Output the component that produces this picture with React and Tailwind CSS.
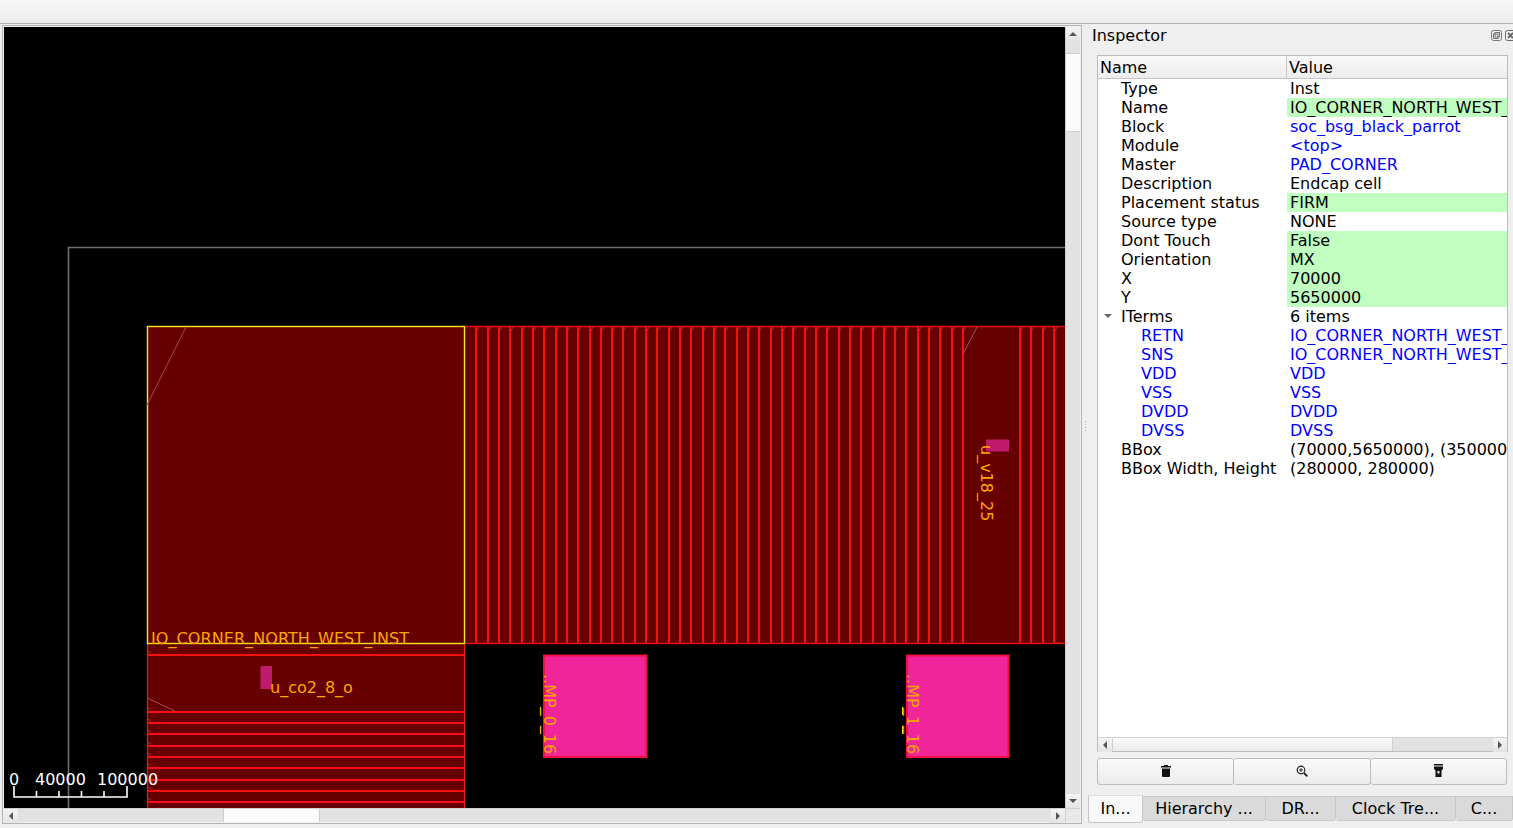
import React from 'react';

const rows = [
  { name: 'Type', value: 'Inst' },
  { name: 'Name', value: 'IO_CORNER_NORTH_WEST_INST', green: true },
  { name: 'Block', value: 'soc_bsg_black_parrot', link: true },
  { name: 'Module', value: '<top>', link: true },
  { name: 'Master', value: 'PAD_CORNER', link: true },
  { name: 'Description', value: 'Endcap cell' },
  { name: 'Placement status', value: 'FIRM', green: true },
  { name: 'Source type', value: 'NONE' },
  { name: 'Dont Touch', value: 'False', green: true },
  { name: 'Orientation', value: 'MX', green: true },
  { name: 'X', value: '70000', green: true },
  { name: 'Y', value: '5650000', green: true },
  { name: 'ITerms', value: '6 items', open: true },
  { name: 'RETN', value: 'IO_CORNER_NORTH_WEST_INST/RETN', child: true, link: true },
  { name: 'SNS', value: 'IO_CORNER_NORTH_WEST_INST/SNS', child: true, link: true },
  { name: 'VDD', value: 'VDD', child: true, link: true },
  { name: 'VSS', value: 'VSS', child: true, link: true },
  { name: 'DVDD', value: 'DVDD', child: true, link: true },
  { name: 'DVSS', value: 'DVSS', child: true, link: true },
  { name: 'BBox', value: '(70000,5650000), (350000,5930000)' },
  { name: 'BBox Width, Height', value: '(280000, 280000)' },
];

const font = 'DejaVu Sans, sans-serif';

// pad cell edges along the top row
const padLines = [];
for (let i = 1; i <= 44; i++) padLines.push(Math.round(465 + i * 11.32));
const padLinesRight = [1020, 1031, 1043, 1054];
const stripeYs = [655, 712, 723, 734, 746, 757, 768, 780, 791, 802];

function Canvas() {
  // svg origin sits at page (4, 27)
  return (
    <svg width="1061" height="781" viewBox="4 27 1061 781" className="block shrink-0 bg-black">
      <path d="M68.5 808V247.5H1065" fill="none" stroke="#6e6e6e" strokeWidth="1.6" />

      <rect x="147" y="326" width="918" height="318" fill="#660000" />
      <rect x="147" y="644" width="318" height="164" fill="#660000" />

      {padLines.concat(padLinesRight).map((x) => (
        <g key={x}>
          <line x1={x} y1="326" x2={x} y2="644" stroke="#f50f0f" strokeWidth="2" />
          <line x1={x + 1} y1="331" x2={x + 3} y2="327" stroke="#b04040" strokeWidth="0.8" />
        </g>
      ))}
      <line x1="465" y1="326.5" x2="1065" y2="326.5" stroke="#e81010" strokeWidth="1.3" />
      <line x1="465" y1="643.5" x2="1065" y2="643.5" stroke="#e81010" strokeWidth="1.3" />
      <line x1="963" y1="354" x2="977" y2="327" stroke="#a05050" strokeWidth="1" />

      {stripeYs.map((y) => (
        <g key={y}>
          <line x1="147" y1={y} x2="465" y2={y} stroke="#f50f0f" strokeWidth="2" />
          <line x1="148" y1={y - 4} x2="151" y2={y - 2} stroke="#b04040" strokeWidth="0.8" />
        </g>
      ))}
      <line x1="147.5" y1="644" x2="147.5" y2="808" stroke="#e02010" strokeWidth="1.2" />
      <line x1="464.5" y1="644" x2="464.5" y2="808" stroke="#e02010" strokeWidth="1.2" />
      <line x1="147" y1="698" x2="175" y2="711" stroke="#a05050" strokeWidth="1" />

      <rect x="147.5" y="326.5" width="317" height="317" fill="none" stroke="#ffe81a" strokeWidth="1.4" />
      <line x1="147" y1="405" x2="186" y2="327" stroke="#a05050" strokeWidth="1" />

      <rect x="260.5" y="666" width="11.5" height="23" fill="#c01a6e" />
      <rect x="986" y="439.5" width="23" height="12" fill="#c01a6e" />

      <g fill="#f0259a" stroke="#f01040" strokeWidth="2">
        <rect x="544" y="655.5" width="102.5" height="101.5" />
        <rect x="907" y="655.5" width="101.5" height="101.5" />
      </g>
      <g fill="#ffe81a">
        <rect x="540" y="707" width="1" height="8" />
        <rect x="540" y="726" width="1" height="8" />
        <rect x="902" y="707" width="1" height="8" />
        <rect x="902" y="726" width="1" height="8" />
      </g>

      <g fontFamily={font} fontSize="16" fill="#ffa500">
        <text x="151" y="644" letterSpacing="0.08">IO_CORNER_NORTH_WEST_INST</text>
        <text x="270" y="693">u_co2_8_o</text>
        <text transform="translate(981 445) rotate(90)">u_v18_25</text>
        <text transform="translate(544 674) rotate(90)">..MP_0_16</text>
        <text transform="translate(907 674) rotate(90)">..MP_1_16</text>
      </g>

      <g fontFamily={font} fontSize="16" fill="#ffffff">
        <text x="9" y="785">0</text>
        <text x="35" y="785">40000</text>
        <text x="97" y="785">100000</text>
      </g>
      <path d="M14 786V797H127V786M36.5 791V797M59 791V797M81.5 791V797M104 791V797" fill="none" stroke="#ffffff" strokeWidth="1.6" />
    </svg>
  );
}

function Arrow({ dir }) {
  const d = {
    up: 'M0 4L4 0L8 4Z',
    down: 'M0 0L4 4L8 0Z',
    left: 'M4 0L0 4L4 8Z',
    right: 'M0 0L4 4L0 8Z',
  }[dir];
  const vert = dir === 'up' || dir === 'down';
  return (
    <svg width={vert ? 8 : 4} height={vert ? 4 : 8}>
      <path d={d} fill="#555555" />
    </svg>
  );
}

function ScrollBtn({ dir }) {
  return (
    <div className="w-[14px] h-[14px] shrink-0 flex items-center justify-center bg-gradient-to-b from-[#f4f4f4] to-[#e4e4e4]">
      <Arrow dir={dir} />
    </div>
  );
}

function TrashIcon() {
  return (
    <svg width="10" height="12" viewBox="0 0 10 12">
      <path d="M3 0h4v1h3v1.5H0V1h3zM1 3.5h8V11a1 1 0 0 1-1 1H2a1 1 0 0 1-1-1z" fill="#111111" />
    </svg>
  );
}

function ZoomIcon() {
  return (
    <svg width="12" height="12" viewBox="0 0 12 12" fill="none" stroke="#222222">
      <circle cx="5" cy="5" r="3.8" strokeWidth="1.2" />
      <path d="M3.2 5h3.6M5 3.2v3.6" strokeWidth="1" />
      <path d="M8 8l3.4 3.4" strokeWidth="1.8" />
    </svg>
  );
}

function TorchIcon() {
  return (
    <svg width="9" height="13" viewBox="0 0 9 13">
      <path d="M0 0h9v1.5H0zM0 2.5h9V5L7.5 6.5V13h-6V6.5L0 5z" fill="#111111" />
      <rect x="3.5" y="7" width="2" height="2.5" fill="#f0f0f0" />
    </svg>
  );
}

function TreeRow({ row }) {
  return (
    <div className="flex h-[19px] leading-[19px]">
      <div className={`relative w-[189px] shrink-0 whitespace-nowrap ${row.child ? 'pl-[43px] text-[#0000ff]' : 'pl-[23px]'}`}>
        {row.open && (
          <svg width="8" height="5" className="absolute left-[6px] top-[7px]">
            <path d="M0 0H8L4 4Z" fill="#666666" />
          </svg>
        )}
        {row.name}
      </div>
      <div className={`flex-1 min-w-0 overflow-hidden whitespace-nowrap pl-[3px] ${row.green ? 'bg-[#c0ffc0]' : ''} ${row.link ? 'text-[#0000ff]' : ''}`}>
        {row.value}
      </div>
    </div>
  );
}

function Tab({ width, active, children }) {
  if (active) {
    return (
      <div className={`${width} h-[28px] shrink-0 flex items-center justify-center bg-[#f8f8f8] border border-[#c4c4c4] border-t-[#dcdcdc] rounded-b-[3px]`}>
        {children}
      </div>
    );
  }
  return (
    <div className={`${width} h-[25px] mt-px shrink-0 flex items-center justify-center bg-[#dadada] border border-[#c8c8c8] border-l-0 rounded-b-[3px]`}>
      {children}
    </div>
  );
}

export default function App() {
  return (
    <div className="w-[1513px] h-[828px] overflow-hidden flex flex-col bg-[#efefef] text-[16px] text-black" style={{ fontFamily: font }}>
      <div className="h-[24px] shrink-0 bg-gradient-to-b from-[#f7f7f7] to-[#eeeeee] border-b border-[#b4b4b4]"></div>

      <div className="flex flex-1 min-h-0 pl-[2px]">
        {/* layout viewer */}
        <div className="w-[1080px] h-[799px] mt-px shrink-0 border border-[#b4b4b4] p-px bg-[#f0f0f0]">
          <div className="flex">
            <Canvas />
            <div className="w-[15px] h-[781px] flex flex-col bg-[#e2e2e2] border-l border-[#cfcfcf]">
              <ScrollBtn dir="up" />
              <div className="h-[12px] shrink-0 bg-[#e2e2e2]"></div>
              <div className="h-[79px] shrink-0 bg-[#fbfbfb] border-y border-[#d0d0d0]"></div>
              <div className="flex-1"></div>
              <ScrollBtn dir="down" />
            </div>
          </div>
          <div className="flex h-[14px] border-t border-[#cfcfcf]">
            <ScrollBtn dir="left" />
            <div className="w-[205px] bg-[#e2e2e2]"></div>
            <div className="w-[97px] bg-[#fbfbfb] border-x border-[#cccccc]"></div>
            <div className="w-[731px] bg-[#e2e2e2]"></div>
            <ScrollBtn dir="right" />
            <div className="flex-1 bg-[#e8e8e8] border-l border-[#cfcfcf]"></div>
          </div>
        </div>

        {/* splitter */}
        <div className="w-[6px] shrink-0 flex flex-col items-center justify-center gap-[2px]">
          <span className="w-px h-px bg-[#aaaaaa]"></span>
          <span className="w-px h-px bg-[#aaaaaa]"></span>
          <span className="w-px h-px bg-[#aaaaaa]"></span>
          <span className="w-px h-px bg-[#aaaaaa]"></span>
        </div>

        {/* inspector dock */}
        <div className="flex-1 min-w-0 flex flex-col">
          <div className="h-[31px] shrink-0 relative pl-[4px] pt-[1px] leading-[22px]">
            Inspector
            <div className="absolute right-[-3px] top-[6px] flex gap-[3px]">
              <svg width="11" height="11" viewBox="0 0 11 11" fill="none" stroke="#777777">
                <rect x="0.5" y="0.5" width="10" height="10" rx="2" />
                <rect x="4" y="2.5" width="4.5" height="4.5" />
                <rect x="2.5" y="4" width="4.5" height="4.5" />
              </svg>
              <svg width="11" height="11" viewBox="0 0 11 11" fill="none" stroke="#666666">
                <rect x="0.5" y="0.5" width="10" height="10" rx="2" />
                <path d="M3 3l5 5M8 3l-5 5" strokeWidth="1.8" />
              </svg>
            </div>
          </div>

          <div className="ml-[9px] w-[411px] h-[697px] shrink-0 flex flex-col border border-[#bdbdbd] bg-white">
            <div className="flex h-[23px] shrink-0 leading-[23px] bg-gradient-to-b from-[#fafafa] to-[#ececec] border-b border-[#c4c4c4]">
              <div className="w-[189px] shrink-0 pl-[2px] border-r border-[#c8c8c8]">Name</div>
              <div className="pl-[2px]">Value</div>
            </div>
            <div className="flex-1 min-h-0">
              {rows.map((row) => (
                <TreeRow key={row.name + row.value} row={row} />
              ))}
            </div>
            <div className="flex h-[14px] shrink-0 border-t border-[#d0d0d0]">
              <ScrollBtn dir="left" />
              <div className="w-[281px] bg-gradient-to-b from-[#fafafa] to-[#ececec] border-x border-[#d0d0d0]"></div>
              <div className="flex-1 bg-[#e2e2e2]"></div>
              <ScrollBtn dir="right" />
            </div>
          </div>

          <div className="ml-[9px] mt-[6px] w-[410px] h-[27px] shrink-0 flex">
            <div className="w-[137px] pb-[2px] flex items-center justify-center bg-gradient-to-b from-[#fafafa] to-[#ececec] border border-[#bcbcbc] rounded-[3px]"><TrashIcon /></div>
            <div className="w-[137px] pb-[2px] flex items-center justify-center bg-gradient-to-b from-[#fafafa] to-[#ececec] border border-[#bcbcbc] border-l-0 rounded-[3px]"><ZoomIcon /></div>
            <div className="w-[136px] pb-[2px] flex items-center justify-center bg-gradient-to-b from-[#fafafa] to-[#ececec] border border-[#bcbcbc] border-l-0 rounded-[3px]"><TorchIcon /></div>
          </div>

          <div className="mt-[10px] flex">
            <Tab width="w-[55px]" active>In...</Tab>
            <Tab width="w-[123px]">Hierarchy ...</Tab>
            <Tab width="w-[70px]">DR...</Tab>
            <Tab width="w-[120px]">Clock Tre...</Tab>
            <Tab width="w-[57px]">C...</Tab>
          </div>
        </div>
      </div>
    </div>
  );
}
